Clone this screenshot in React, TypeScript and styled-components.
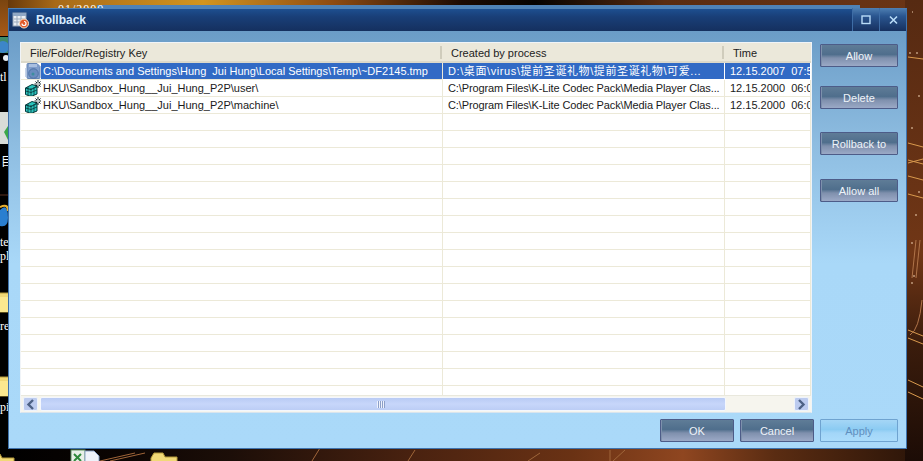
import React from 'react';
import styled, { createGlobalStyle, css } from 'styled-components';

const GlobalStyle = createGlobalStyle`
  html, body { margin: 0; padding: 0; background: #000; }
  body { font-family: "Liberation Sans", "Noto Sans CJK SC", sans-serif; }
`;

const Desktop = styled.div`
  position: relative;
  width: 923px;
  height: 461px;
  overflow: hidden;
  background: #000;
`;

const Wallpaper = styled.svg`
  position: absolute;
  inset: 0;
`;

const DesktopLabel = styled.span<{ $x: number; $y: number }>`
  position: absolute;
  left: ${({ $x }) => $x}px;
  top: ${({ $y }) => $y}px;
  color: #fff;
  font-family: "Liberation Serif", "Noto Sans CJK SC", serif;
  font-size: 12px;
  line-height: 14px;
  white-space: nowrap;
`;

// rotulo que fica meio escondido atras da janela
const HiddenLabel = styled(DesktopLabel)`
  height: 5px;
  line-height: 12px;
  overflow: hidden;
  letter-spacing: 1px;
`;

const Window = styled.div`
  position: absolute;
  left: 8px;
  top: 8px;
  width: 899px;
  height: 441px;
  box-sizing: border-box;
  display: flex;
  flex-direction: column;
  border: 1px solid #3f73ad;
  border-top-color: #4f82b6;
  background: linear-gradient(180deg, #6496c2 0%, #8dbce0 30%, #a9d8f8 58%, #aad9f9 100%);
`;

const TitleBar = styled.div`
  height: 22px;
  flex: none;
  display: flex;
  align-items: center;
  padding-left: 3px;
  color: #d9ecff;
  font-weight: 700;
  background: linear-gradient(180deg, #1d4f90 0%, #193f78 35%, #15305f 100%);
`;

const TitleText = styled.span`
  margin-left: 6px;
  flex: 1;
  font-size: 12px;
`;

const CaptionButton = styled.div`
  width: 26px;
  margin-top: -1px;
  height: 23px;
  display: flex;
  align-items: center;
  justify-content: center;
  border-left: 1px solid #3e6da6;
  color: #b9dcf8;
  background: linear-gradient(180deg, #4f80b4 0%, #2a5690 35%, #16305f 100%);
`;

const Content = styled.div`
  flex: 1;
  display: flex;
  flex-direction: column;
  padding: 11px 8px 7px 11px;
  min-height: 0;
`;

const MainRow = styled.div`
  display: flex;
  gap: 8px;
  height: 371px;
  flex: none;
`;

const ListPanel = styled.div`
  width: 792px;
  flex: none;
  box-sizing: border-box;
  display: flex;
  flex-direction: column;
  background: #fff;
  border: 1px solid #f0f4f8;
  border-bottom-color: #d9e4ee;
  overflow: hidden;
`;

const HeaderRow = styled.div`
  height: 20px;
  flex: none;
  display: grid;
  grid-template-columns: 421px 282px 1fr;
  box-sizing: border-box;
  padding-top: 1px;
  background: #ebe8da;
  border-bottom: 2px solid #dcd9ca;
  font-size: 11px;
  color: #222;
`;

const HeaderCell = styled.div<{ $divider?: boolean }>`
  display: flex;
  align-items: center;
  padding-left: 9px;
  white-space: nowrap;
  ${({ $divider }) =>
    $divider &&
    css`
      border-right: 2px solid #cfccbc;
      margin: 2px 0;
    `}
`;

const Rows = styled.div`
  flex: 1;
  min-height: 0;
  overflow: hidden;
`;

const Row = styled.div`
  height: 17px;
  display: grid;
  grid-template-columns: 422px 282px 1fr;
  font-size: 11px;
  line-height: 15px;
  color: #1a1a1a;
`;

const Cell = styled.div<{ $selected?: boolean; $first?: boolean; $tracking?: number }>`
  height: 17px;
  box-sizing: border-box;
  display: flex;
  align-items: center;
  overflow: hidden;
  white-space: pre;
  border-bottom: 1px solid #ece9d8;
  border-right: 1px solid #ece9d8;
  padding-left: ${({ $first }) => ($first ? 0 : 5)}px;
  letter-spacing: ${({ $tracking }) => $tracking ?? 0}px;
  ${({ $selected }) =>
    $selected &&
    css`
      color: #fff;
    `}
  ${({ $selected, $first }) =>
    $selected &&
    !$first &&
    css`
      background: #316ac5;
      border-bottom-color: #fff;
      border-right-color: #fff;
    `}
`;

const IconSlot = styled.span`
  width: 20px;
  height: 17px;
  flex: none;
  display: flex;
  align-items: center;
  justify-content: flex-end;
  box-sizing: border-box;
`;

const KeyText = styled.span<{ $selected?: boolean }>`
  flex: 1;
  height: 100%;
  padding-left: 2px;
  display: flex;
  align-items: center;
  ${({ $selected }) =>
    $selected &&
    css`
      background: #316ac5;
    `}
`;

const ScrollBar = styled.div`
  height: 17px;
  flex: none;
  display: flex;
  align-items: stretch;
  gap: 2px;
  padding: 1px 2px;
  box-sizing: border-box;
  background: #f6f5ee;
  border-top: 1px solid #e9e8dd;
`;

const ScrollButton = styled.div`
  width: 15px;
  flex: none;
  display: flex;
  align-items: center;
  justify-content: center;
  box-sizing: border-box;
  border: 1px solid #eef3fc;
  border-radius: 2px;
  background: #bccbef;
  color: #4d6185;
`;

const ScrollThumb = styled.div`
  width: 686px;
  flex: none;
  display: flex;
  align-items: center;
  justify-content: center;
  box-sizing: border-box;
  border: 1px solid #f4f7fd;
  border-radius: 2px;
  background: linear-gradient(180deg, #b9cbf4 0%, #c7d6fa 50%, #bccdf5 100%);
`;

const Grip = styled.div`
  width: 8px;
  height: 7px;
  margin-right: 4px;
  background: repeating-linear-gradient(90deg, #eef2fd 0 1px, #8c9fc8 1px 2px);
`;

const ScrollTrack = styled.div`
  flex: 1;
`;

const SideButtons = styled.div`
  width: 78px;
  flex: none;
  display: flex;
  flex-direction: column;
`;

const Footer = styled.div`
  display: flex;
  justify-content: flex-end;
  gap: 6px;
  margin-top: 6px;
`;

const Button = styled.button<{ $top?: number; $wide?: boolean; $disabled?: boolean }>`
  width: ${({ $wide }) => ($wide ? 78 : 74)}px;
  height: 23px;
  flex: none;
  margin: ${({ $top }) => $top ?? 0}px 0 0;
  padding: 1px 0 0;
  box-sizing: border-box;
  font-family: "Liberation Sans", sans-serif;
  font-size: 11px;
  border-radius: 1px;
  color: #eef3f9;
  border: 1px solid #4d5c88;
  box-shadow: inset 1px 0 0 #7d90ac;
  background: linear-gradient(180deg, #5f7c97 0%, #4f6e8c 45%, #7f90ad 62%, #9ba9c6 100%);
  ${({ $disabled }) =>
    $disabled &&
    css`
      color: #5f8fbf;
      border-color: #6fa3d0;
      box-shadow: none;
      background: linear-gradient(180deg, #a5d6f6 0%, #8bcbf2 45%, #a3d6f8 62%, #abdcfb 100%);
    `}
`;

const AppIcon = () => (
  <svg width="18" height="17" viewBox="0 0 18 17">
    <rect x="1" y="1" width="13" height="13" fill="#e9eef4" stroke="#8e9eb2" />
    <rect x="1" y="1" width="13" height="3" fill="#8fa7c4" />
    <path d="M2 7h11M2 10h11M5 4v10M9 4v10" stroke="#9aa9bb" />
    <circle cx="12" cy="11.5" r="4.5" fill="#e2592a" stroke="#f5e3c8" />
    <path d="M10 11.5a2 2 0 1 0 2-2" stroke="#fff" strokeWidth="1.2" fill="none" />
  </svg>
);

const TempFileIcon = () => (
  <svg width="16" height="17" viewBox="0 0 16 17">
    <path d="M2 1.5Q2 .5 3 .5h9l3 3v11q0 1-1 1H3q-1 0-1-1z" fill="#7f9dcb" stroke="#6484b4" />
    <rect x="4" y="1" width="8" height="3" fill="#a9bfe0" />
    <circle cx="8.5" cy="10.5" r="4.8" fill="#6a8cbe" stroke="#4f72a6" />
    <circle cx="8" cy="11" r="1.5" fill="#3c8e9e" />
    <path d="M1 5v9" stroke="#b2c5e2" strokeWidth="1.5" />
  </svg>
);

const RegistryIcon = () => (
  <svg width="16" height="17" viewBox="0 0 16 17">
    <path d="M.5 8L7 4.500l5 1.500v8l-6 2.500-5.500-2z" fill="#2cc4bc" stroke="#05383c" />
    <path d="M.5 11l5.500 1.500 6-2.500M6 8v8.500M3 7v8.500M9 7v8" stroke="#05383c" strokeWidth="0.8" fill="none" />
    <path d="M.5 8L6 9.500 12 6.500" stroke="#05383c" fill="none" />
    <path d="M13 0v8M9.500 4h7M10.500 1.500l5 5M15.500 1.500l-5 5" stroke="#0c2024" />
    <path d="M13 2.500v3M11.500 4h3" stroke="#ffffff" />
  </svg>
);

const Chevron = ({ right }: { right?: boolean }) => (
  <svg width="9" height="11" viewBox="0 0 9 11">
    <path d={right ? 'M2 1l4.500 4.500L2 10' : 'M7 1L2.500 5.500 7 10'} fill="none" stroke="currentColor" strokeWidth="2.400" />
  </svg>
);

const Folder = ({ x, y }: { x: number; y: number }) => (
  <g transform={`translate(${x} ${y})`}>
    <path d="M0 6l3-5h9l2 4h12v19H0z" fill="#f1d977" stroke="#b59a3a" />
    <path d="M0 9h26v15H0z" fill="#fbe88f" />
  </g>
);

const Wallpapers = () => (
  <Wallpaper width="923" height="461" viewBox="0 0 923 461">
    <defs>
      <linearGradient id="topStrip" x1="0" x2="1" y1="0" y2="0">
        <stop offset="0" stopColor="#5c3008" />
        <stop offset="0.06" stopColor="#a86a18" />
        <stop offset="0.22" stopColor="#d2951f" />
        <stop offset="0.36" stopColor="#8f4c12" />
        <stop offset="0.5" stopColor="#1c0a02" />
        <stop offset="0.58" stopColor="#050200" />
        <stop offset="0.72" stopColor="#5a2c10" />
        <stop offset="1" stopColor="#6b3516" />
      </linearGradient>
      <linearGradient id="bottomStrip" x1="0" x2="1" y1="0" y2="0">
        <stop offset="0" stopColor="#000" />
        <stop offset="0.12" stopColor="#0a0402" />
        <stop offset="0.25" stopColor="#1c0e08" />
        <stop offset="0.45" stopColor="#4a2210" />
        <stop offset="0.62" stopColor="#6a3214" />
        <stop offset="0.74" stopColor="#8f4620" />
        <stop offset="0.84" stopColor="#5a2c12" />
        <stop offset="1" stopColor="#2a1408" />
      </linearGradient>
      <linearGradient id="rightStrip" x1="0" x2="0" y1="0" y2="1">
        <stop offset="0" stopColor="#562a12" />
        <stop offset="0.55" stopColor="#703616" />
        <stop offset="0.75" stopColor="#3a1c0c" />
        <stop offset="1" stopColor="#1c0c06" />
      </linearGradient>
      <linearGradient id="leftTop" x1="0" x2="0" y1="0" y2="1">
        <stop offset="0" stopColor="#7a4510" />
        <stop offset="1" stopColor="#a85a18" />
      </linearGradient>
    </defs>
    <rect x="0" y="0" width="923" height="12" fill="url(#topStrip)" />
    <rect x="0" y="446" width="923" height="15" fill="url(#bottomStrip)" />
    <rect x="905" y="0" width="18" height="461" fill="url(#rightStrip)" />
    <path d="M908 57l15 2M908 143l15 4M908 160l15 4M908 163l15-4M908 176l15 4M908 194l15 4M908 330l15 6M908 338l15 6M908 380l15 7M908 392l15 7" stroke="#d99a4e" strokeWidth="1" />
    <path d="M916 240l-4 38M920 240l-4 38M922 300q-3 30-12 35" stroke="#b0744a" fill="none" />
    <path d="M912 12h1M909 53h2M916 53h2M911 128h2M918 96h2M918 192h2M915 215h2M911 243h2M913 276h2M911 283h2" stroke="#f0d0b0" />
    <path d="M320 448l-8 13M415 450l-7 11M540 453l-12 8M610 450v11M625 450l-12 11M100 461l35-8M110 461l35-8" stroke="#a0663a" />
    {/* icones da area de trabalho */}
    <rect x="0" y="0" width="8" height="36" fill="url(#leftTop)" />
    <rect x="0" y="37" width="8" height="16" fill="#3f8a6a" />
    <circle cx="3" cy="47" r="6" fill="#3d86c8" />
    <circle cx="6" cy="58" r="3" fill="#e8eef2" />
    <rect x="0" y="112" width="8" height="32" fill="#d8dcd8" />
    <path d="M4 132l4-6v14z" fill="#3aa84a" />
    <path d="M0 195h8" stroke="#5a3020" />
    <path d="M0 210q8-8 8 8 0 10-8 8z" fill="#2a7fd0" />
    <path d="M0 207q8-4 8 4" stroke="#e8b030" fill="none" strokeWidth="2" />
    <Folder x={-16} y={288} />
    <Folder x={-16} y={372} />
    <Folder x={-12} y={453} />
    <Folder x={151} y={452} />
    <rect x="71" y="450" width="14" height="14" fill="#e8f0e8" stroke="#5c9060" />
    <path d="M74 454l7 7M81 454l-7 7" stroke="#2f8a3c" strokeWidth="2" />
    <path d="M85 451h9l5 5v8H85z" fill="#eef2fa" stroke="#8ba3c8" />
    {/* janela por tras */}
    <rect x="97" y="5" width="763" height="3" fill="#4f82b6" />
  </Wallpaper>
);

interface Entry {
  key: string;
  process: string;
  tracking: number;
  time: string;
  kind: 'file' | 'registry';
}

const entries: Entry[] = [
  {
    key: 'C:\\Documents and Settings\\Hung  Jui Hung\\Local Settings\\Temp\\~DF2145.tmp',
    process: 'D:\\桌面\\virus\\提前圣诞礼物\\提前圣诞礼物\\可爱...',
    tracking: 0.6,
    time: '12.15.2007  07:50:21',
    kind: 'file',
  },
  {
    key: 'HKU\\Sandbox_Hung__Jui_Hung_P2P\\user\\',
    process: 'C:\\Program Files\\K-Lite Codec Pack\\Media Player Clas...',
    tracking: -0.12,
    time: '12.15.2000  06:00:00',
    kind: 'registry',
  },
  {
    key: 'HKU\\Sandbox_Hung__Jui_Hung_P2P\\machine\\',
    process: 'C:\\Program Files\\K-Lite Codec Pack\\Media Player Clas...',
    tracking: -0.12,
    time: '12.15.2000  06:00:00',
    kind: 'registry',
  },
];

const blankRows = Array.from({ length: 17 }, (_, i) => i);

const App: React.FC = () => (
  <Desktop>
    <GlobalStyle />
    <Wallpapers />
    <HiddenLabel $x={58} $y={3}>01/2000</HiddenLabel>
    <DesktopLabel $x={0} $y={70}>tl</DesktopLabel>
    <DesktopLabel $x={1} $y={155}>目</DesktopLabel>
    <DesktopLabel $x={0} $y={235}>te:</DesktopLabel>
    <DesktopLabel $x={0} $y={249}>pl</DesktopLabel>
    <DesktopLabel $x={0} $y={319}>re'</DesktopLabel>
    <DesktopLabel $x={0} $y={400}>pi</DesktopLabel>

    <Window>
      <TitleBar>
        <AppIcon />
        <TitleText>Rollback</TitleText>
        <CaptionButton>
          <svg width="11" height="10" viewBox="0 0 11 10">
            <rect x="1" y="1" width="8" height="7.500" fill="none" stroke="currentColor" strokeWidth="1.400" />
          </svg>
        </CaptionButton>
        <CaptionButton>
          <svg width="11" height="10" viewBox="0 0 11 10">
            <path d="M2 1.500l7 7M9 1.500l-7 7" stroke="currentColor" strokeWidth="1.600" />
          </svg>
        </CaptionButton>
      </TitleBar>
      <Content>
        <MainRow>
          <ListPanel>
            <HeaderRow>
              <HeaderCell $divider>File/Folder/Registry Key</HeaderCell>
              <HeaderCell $divider>Created by process</HeaderCell>
              <HeaderCell>Time</HeaderCell>
            </HeaderRow>
            <Rows>
              {entries.map((entry, index) => (
                <Row key={entry.key}>
                  <Cell $first $selected={index === 0}>
                    <IconSlot>{entry.kind === 'file' ? <TempFileIcon /> : <RegistryIcon />}</IconSlot>
                    <KeyText $selected={index === 0}>{entry.key}</KeyText>
                  </Cell>
                  <Cell $selected={index === 0} $tracking={entry.tracking}>{entry.process}</Cell>
                  <Cell $selected={index === 0}>{entry.time}</Cell>
                </Row>
              ))}
              {blankRows.map((n) => (
                <Row key={n}>
                  <Cell />
                  <Cell />
                  <Cell />
                </Row>
              ))}
            </Rows>
            <ScrollBar>
              <ScrollButton>
                <Chevron />
              </ScrollButton>
              <ScrollThumb>
                <Grip />
              </ScrollThumb>
              <ScrollTrack />
              <ScrollButton>
                <Chevron right />
              </ScrollButton>
            </ScrollBar>
          </ListPanel>
          <SideButtons>
            <Button $wide $top={2}>Allow</Button>
            <Button $wide $top={19}>Delete</Button>
            <Button $wide $top={23}>Rollback to</Button>
            <Button $wide $top={24}>Allow all</Button>
          </SideButtons>
        </MainRow>
        <Footer>
          <Button>OK</Button>
          <Button>Cancel</Button>
          <Button $wide $disabled>Apply</Button>
        </Footer>
      </Content>
    </Window>
  </Desktop>
);

export default App;
